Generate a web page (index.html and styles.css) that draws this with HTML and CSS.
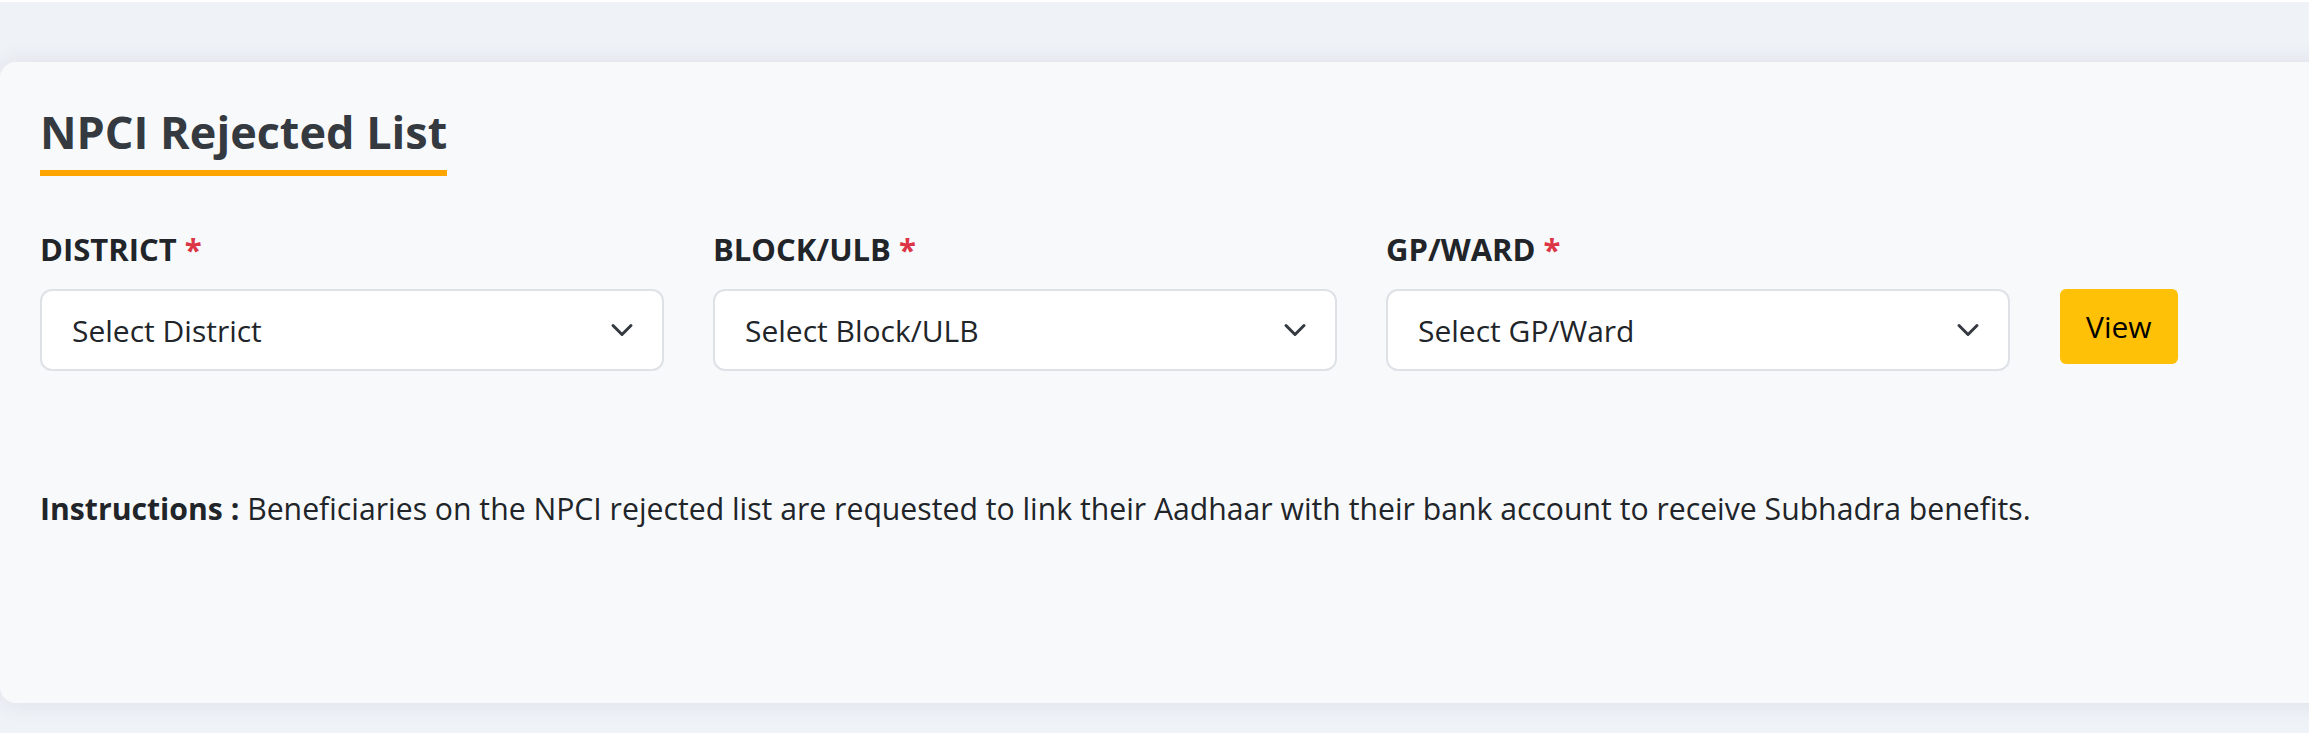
FILE: index.html
```html
<!DOCTYPE html>
<html lang="en">
<head>
<meta charset="utf-8">
<title>NPCI Rejected List</title>
<link rel="stylesheet" href="styles.css">
</head>
<body>
<main class="page">
  <section class="card">
    <h1 class="title">NPCI Rejected List</h1>
    <form class="filters">
      <label class="label">DISTRICT <span class="req">*</span></label>
      <label class="label">BLOCK/ULB <span class="req">*</span></label>
      <label class="label">GP/WARD <span class="req">*</span></label>
      <span></span>
      <div class="select"><span>Select District</span><svg class="chev" width="24" height="14" viewBox="0 0 24 14"><path d="M3 2.5 L12 11.5 L21 2.5" fill="none" stroke="#343a40" stroke-width="3" stroke-linecap="round" stroke-linejoin="round"/></svg></div>
      <div class="select"><span>Select Block/ULB</span><svg class="chev" width="24" height="14" viewBox="0 0 24 14"><path d="M3 2.5 L12 11.5 L21 2.5" fill="none" stroke="#343a40" stroke-width="3" stroke-linecap="round" stroke-linejoin="round"/></svg></div>
      <div class="select"><span>Select GP/Ward</span><svg class="chev" width="24" height="14" viewBox="0 0 24 14"><path d="M3 2.5 L12 11.5 L21 2.5" fill="none" stroke="#343a40" stroke-width="3" stroke-linecap="round" stroke-linejoin="round"/></svg></div>
      <button type="button" class="btn-view">View</button>
    </form>
    <p class="instructions"><strong>Instructions :</strong> Beneficiaries on the NPCI rejected list are requested to link their Aadhaar with their bank account to receive Subhadra benefits.</p>
  </section>
</main>
</body>
</html>
```

FILE: styles.css
```css
html, body {
  margin: 0;
  padding: 0;
}
body {
  background: #eff2f7;
  border-top: 2px solid #ffffff;
  font-family: "Open Sans", "Noto Sans", sans-serif;
  color: #212529;
  overflow: hidden;
  height: 731px;
}
.page {
  padding-top: 60px;
}
.card {
  background: #f8f9fb;
  border-radius: 16px 0 0 16px;
  box-shadow: 0 0 24px rgba(30, 40, 70, 0.09);
  margin-right: -40px;
  padding: 42px 40px 172px 40px;
}
.title {
  display: inline-block;
  margin: 0;
  font-size: 45px;
  line-height: 56px;
  font-weight: 700;
  color: #343a40;
  padding-bottom: 10px;
  border-bottom: 6px solid #ffa500;
}
.filters {
  display: grid;
  grid-template-columns: repeat(3, 624px) auto;
  column-gap: 49px;
  row-gap: 20px;
  align-items: start;
  justify-content: start;
  margin-top: 53px;
}
.label {
  font-size: 31px;
  line-height: 40px;
  font-weight: 700;
  color: #212529;
}
.req {
  color: #dc3545;
}
.select {
  display: flex;
  align-items: center;
  justify-content: space-between;
  box-sizing: border-box;
  height: 82px;
  background: #ffffff;
  border: 2px solid #dee2e6;
  border-radius: 12px;
  padding: 0 28px 0 30px;
  font-size: 30px;
  color: #212529;
}
.chev {
  display: block;
  flex: none;
}
.btn-view {
  box-sizing: border-box;
  margin-left: 1px;
  height: 75px;
  padding: 0 26px;
  background: #ffc107;
  border: none;
  border-radius: 6px;
  font-family: inherit;
  font-size: 30px;
  color: #000000;
}
.instructions {
  margin: 115px 0 0 0;
  font-size: 30.2px;
  line-height: 45px;
  color: #212529;
}
.instructions strong {
  font-weight: 700;
}
```
